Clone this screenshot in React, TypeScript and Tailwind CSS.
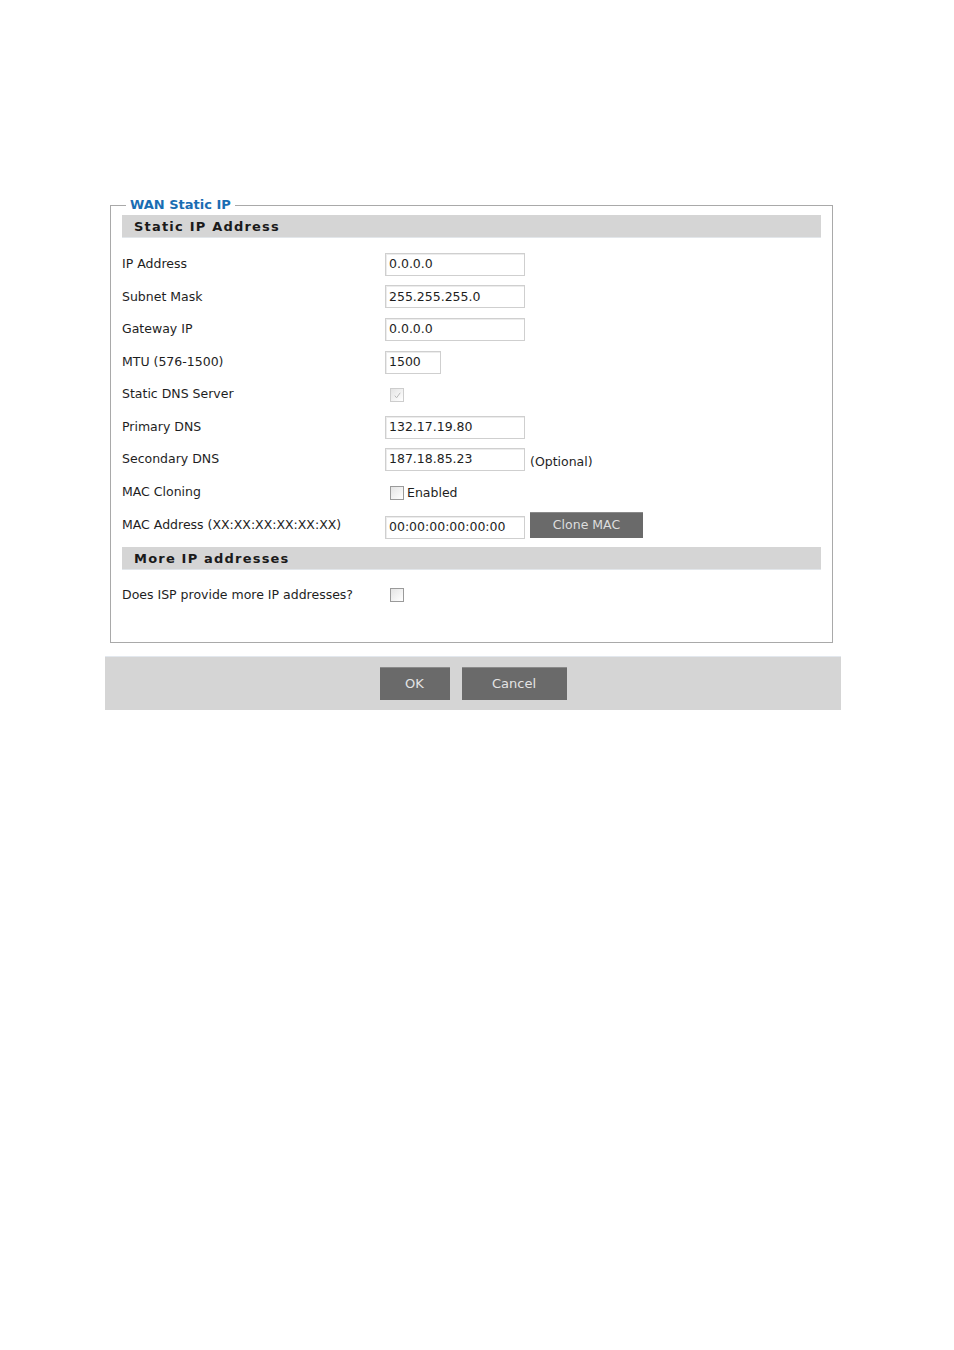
import React from "react";

const font = "[font-family:'DejaVu_Sans',Verdana,sans-serif]";

type Row = {
  label: string;
  kind: "text" | "check" | "mac";
  value?: string;
  width?: string;
  note?: string;
  checked?: boolean;
  disabled?: boolean;
  caption?: string;
};

const rows: Row[] = [
  { label: "IP Address", kind: "text", value: "0.0.0.0" },
  { label: "Subnet Mask", kind: "text", value: "255.255.255.0" },
  { label: "Gateway IP", kind: "text", value: "0.0.0.0" },
  { label: "MTU (576-1500)", kind: "text", value: "1500", width: "w-[56px]" },
  { label: "Static DNS Server", kind: "check", checked: true, disabled: true },
  { label: "Primary DNS", kind: "text", value: "132.17.19.80" },
  { label: "Secondary DNS", kind: "text", value: "187.18.85.23", note: "(Optional)" },
  { label: "MAC Cloning", kind: "check", caption: "Enabled" },
  { label: "MAC Address (XX:XX:XX:XX:XX:XX)", kind: "mac", value: "00:00:00:00:00:00" },
];

function TextBox({ value, width = "w-[140px]" }: { value: string; width?: string }) {
  return (
    <div
      className={`${width} h-[23px] border border-[#cfcfcf] bg-white pl-[3px] flex items-center text-[12.5px] text-[#1e1e1e] shadow-[inset_1px_1px_0_#ececec]`}
    >
      {value}
    </div>
  );
}

function Check({ checked, disabled }: { checked?: boolean; disabled?: boolean }) {
  return (
    <span
      className={`size-[14px] border ${disabled ? "border-[#cdcdcd]" : "border-[#9a9a9a]"} bg-gradient-to-br from-[#e4e4e4] to-[#ffffff] grid place-items-center`}
    >
      {checked && (
        <svg viewBox="0 0 10 10" className="size-[9px]">
          <path d="M2 5.2 L4 7.5 L8 2" fill="none" stroke="#b8b8b8" strokeWidth="1.1" />
        </svg>
      )}
    </span>
  );
}

function SectionBar({ title }: { title: string }) {
  return (
    <div className="h-[23px] bg-[#d5d5d5] flex items-center pl-[12px] shadow-[inset_0_-1px_0_#e2e6ea]">
      <span className="text-[13px] font-bold tracking-[1.2px] text-[#1a1a1a]">{title}</span>
    </div>
  );
}

export default function App() {
  return (
    <div className={`min-h-[1350px] bg-white ${font}`}>
      <div className="ml-[105px] w-[736px] pt-[197px]">
        <fieldset className="ml-[5px] w-[723px] border border-[#a9a9a9] px-[11px] pb-[22px]">
          <legend className="ml-[4px] px-[4px] text-[13px] font-bold text-[#1a6db3] leading-[16px]">
            WAN Static IP
          </legend>
          <div className="mt-[2px]">
            <SectionBar title="Static IP Address" />
          </div>
          <div className="pt-[10px] pb-[6px]">
            {rows.map((r) => (
              <div key={r.label} className="h-[32.6px] flex items-center text-[12.5px] text-[#1e1e1e]">
                <div className="w-[263px]">{r.label}</div>
                {r.kind === "text" && (
                  <div className="flex items-center">
                    <TextBox value={r.value!} width={r.width} />
                    {r.note && <span className="ml-[5px] mt-[5px]">{r.note}</span>}
                  </div>
                )}
                {r.kind === "check" && (
                  <div className="flex items-center pl-[5px] mt-[1px]">
                    <Check checked={r.checked} disabled={r.disabled} />
                    {r.caption && <span className="ml-[3px]">{r.caption}</span>}
                  </div>
                )}
                {r.kind === "mac" && (
                  <div className="flex items-center">
                    <div className="mt-[5px]">
                      <TextBox value={r.value!} />
                    </div>
                    <button className="ml-[5px] w-[113px] h-[26px] bg-[#6a6a6a] text-[#dedede] text-[12.5px] shadow-[inset_0_1px_0_#8a8a8a]">
                      Clone MAC
                    </button>
                  </div>
                )}
              </div>
            ))}
          </div>
          <SectionBar title="More IP addresses" />
          <div className="h-[50px] flex items-center text-[12.5px] text-[#1e1e1e]">
            <div className="w-[268px]">Does ISP provide more IP addresses?</div>
            <Check />
          </div>
        </fieldset>
        <div className="mt-[13px] h-[54px] bg-[#d5d5d5] border-t border-[#e3e8ee] flex items-center justify-center gap-[12px]">
          <button className="w-[70px] h-[33px] bg-[#6a6a6a] text-[#e4e4e4] text-[13px] shadow-[inset_0_1px_0_#8a8a8a]">
            OK
          </button>
          <button className="w-[105px] h-[33px] bg-[#6a6a6a] text-[#e4e4e4] text-[13px] shadow-[inset_0_1px_0_#8a8a8a]">
            Cancel
          </button>
        </div>
      </div>
    </div>
  );
}
